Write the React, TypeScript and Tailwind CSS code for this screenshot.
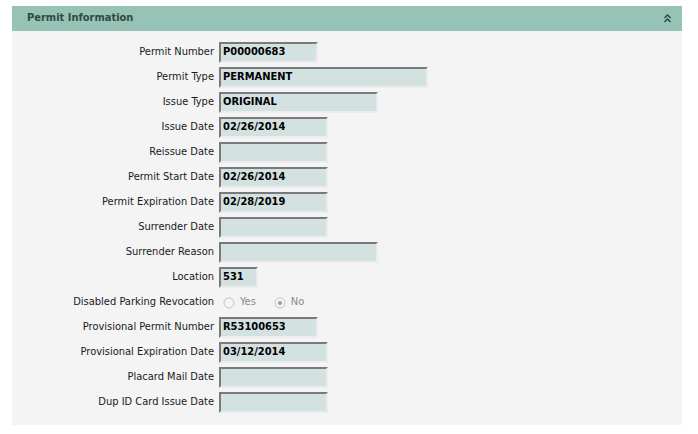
import React from "react";

type Field = { label: string; value?: string; width: number };

const FIELDS: (Field | "radio")[] = [
  { label: "Permit Number", value: "P00000683", width: 99 },
  { label: "Permit Type", value: "PERMANENT", width: 209 },
  { label: "Issue Type", value: "ORIGINAL", width: 159 },
  { label: "Issue Date", value: "02/26/2014", width: 109 },
  { label: "Reissue Date", width: 109 },
  { label: "Permit Start Date", value: "02/26/2014", width: 109 },
  { label: "Permit Expiration Date", value: "02/28/2019", width: 109 },
  { label: "Surrender Date", width: 109 },
  { label: "Surrender Reason", width: 159 },
  { label: "Location", value: "531", width: 39 },
  "radio",
  { label: "Provisional Permit Number", value: "R53100653", width: 99 },
  { label: "Provisional Expiration Date", value: "03/12/2014", width: 109 },
  { label: "Placard Mail Date", width: 109 },
  { label: "Dup ID Card Issue Date", width: 109 },
];

function Radio({ checked, label }: { checked?: boolean; label: string }) {
  return (
    <span className="flex items-center gap-[5px] text-[#8a8a8a]">
      <svg width="12" height="12" viewBox="0 0 12 12">
        <circle cx="6" cy="6" r="5" fill="#f4f4f4" stroke="#c4c4c4" />
        {checked && <circle cx="6" cy="6" r="2" fill="#9a9a9a" />}
      </svg>
      {label}
    </span>
  );
}

export default function App() {
  return (
    <div
      className="min-h-[434px] bg-white pt-[6px] pl-[12px]"
      style={{ fontFamily: '"DejaVu Sans Condensed", "DejaVu Sans", sans-serif' }}
    >
      <div className="w-[670px] bg-[#f4f4f4]">
        <div className="flex h-[25px] items-center justify-between bg-[#97c2b6] pl-[15px] pr-[11px]">
          <span className="text-[11px] font-bold text-[#2e4a43]">Permit Information</span>
          <svg width="7" height="9" viewBox="0 0 7 9" className="text-[#2b423c]">
            <path d="M0.5 4 L3.5 1 L6.5 4 M0.5 8 L3.5 5 L6.5 8" fill="none" stroke="currentColor" strokeWidth="1.4" />
          </svg>
        </div>
        <div className="flex flex-col gap-[4px] pt-[11px] pb-[12px] text-[11px] text-[#1a1a1a]">
          {FIELDS.map((f, i) =>
            f === "radio" ? (
              <div key={i} className="flex h-[21px] items-center">
                <span className="w-[207px] shrink-0 pr-[5px] text-right">Disabled Parking Revocation</span>
                <div className="flex items-center gap-[18px] pl-[4px]">
                  <Radio label="Yes" />
                  <Radio label="No" checked />
                </div>
              </div>
            ) : (
              <div key={i} className="flex h-[21px] items-center">
                <span className="w-[207px] shrink-0 pr-[5px] text-right">{f.label}</span>
                <div
                  className="flex h-[21px] items-center border-2 border-t-[#7a7a7a] border-l-[#7a7a7a] border-r-[#ececec] border-b-[#ececec] bg-[#d3e1e1] pl-[2px] font-bold text-black"
                  style={{ width: f.width }}
                >
                  {f.value}
                </div>
              </div>
            )
          )}
        </div>
      </div>
    </div>
  );
}
